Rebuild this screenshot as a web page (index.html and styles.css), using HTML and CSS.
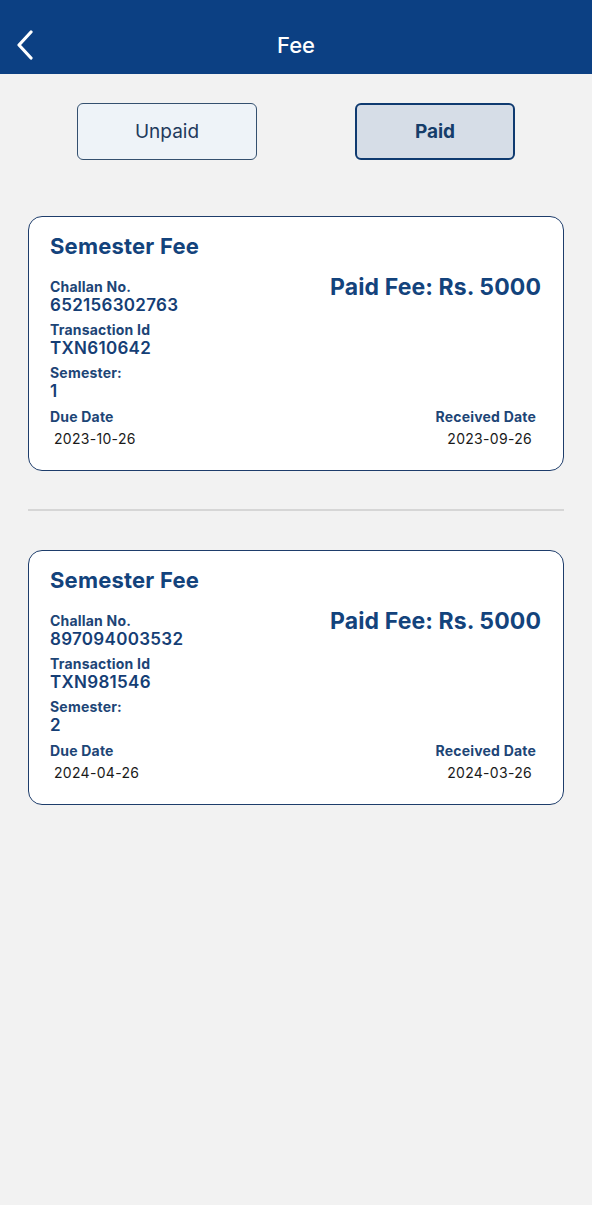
FILE: index.html
```html
<!DOCTYPE html>
<html lang="en">
<head>
<meta charset="utf-8">
<title>Fee</title>
<link rel="stylesheet" href="styles.css">
</head>
<body>
<header class="topbar">
  <button class="back" aria-label="Back">
    <svg width="20" height="30" viewBox="0 0 20 30"><path d="M15 2 L3 15 L15 28" fill="none" stroke="#fff" stroke-width="3.2" stroke-linecap="round" stroke-linejoin="round"/></svg>
  </button>
  <h1 class="title">Fee</h1>
</header>

<div class="tabs">
  <button class="tab tab-unpaid">Unpaid</button>
  <button class="tab tab-paid">Paid</button>
</div>

<main class="list">
  <section class="card">
    <h2 class="card-title">Semester Fee</h2>
    <div class="details">
      <div class="fields">
        <div class="field"><div class="label">Challan No.</div><div class="value">652156302763</div></div>
        <div class="field"><div class="label">Transaction Id</div><div class="value">TXN610642</div></div>
        <div class="field"><div class="label">Semester:</div><div class="value">1</div></div>
      </div>
      <div class="amount">Paid Fee: Rs. 5000</div>
    </div>
    <div class="dates">
      <div class="date-col"><div class="label">Due Date</div><div class="date">2023-10-26</div></div>
      <div class="date-col right"><div class="label">Received Date</div><div class="date">2023-09-26</div></div>
    </div>
  </section>

  <hr class="divider">

  <section class="card">
    <h2 class="card-title">Semester Fee</h2>
    <div class="details">
      <div class="fields">
        <div class="field"><div class="label">Challan No.</div><div class="value">897094003532</div></div>
        <div class="field"><div class="label">Transaction Id</div><div class="value">TXN981546</div></div>
        <div class="field"><div class="label">Semester:</div><div class="value">2</div></div>
      </div>
      <div class="amount">Paid Fee: Rs. 5000</div>
    </div>
    <div class="dates">
      <div class="date-col"><div class="label">Due Date</div><div class="date">2024-04-26</div></div>
      <div class="date-col right"><div class="label">Received Date</div><div class="date">2024-03-26</div></div>
    </div>
  </section>
</main>
</body>
</html>
```

FILE: styles.css
```css
* { box-sizing: border-box; }
html, body { margin: 0; padding: 0; }
body {
  background: #f2f2f2;
  font-family: Inter, "Noto Sans", "Liberation Sans", sans-serif;
  width: 592px;
  min-height: 1205px;
  color: #153e75;
}
.topbar {
  height: 74px;
  background: #0c4083;
  display: flex;
  align-items: center;
  justify-content: center;
  position: relative;
}
.back {
  position: absolute;
  left: 16px;
  top: 30px;
  background: none;
  border: 0;
  padding: 0;
  display: flex;
}
.title {
  margin: 0;
  padding-top: 16px;
  font-size: 22px;
  font-weight: 500;
  color: #fff;
}
.tabs {
  display: flex;
  padding: 29px 0 0 77px;
  gap: 98px;
}
.tab {
  height: 57px;
  border-radius: 6px;
  font-family: inherit;
  font-size: 19px;
  padding: 0;
}
.tab-unpaid {
  width: 180px;
  background: #eef3f8;
  border: 1.5px solid #34506f;
  color: #1f3a5c;
  font-weight: 400;
}
.tab-paid {
  width: 160px;
  background: #d6dde7;
  border: 2.5px solid #0f3a70;
  color: #163d6a;
  font-weight: 700;
}
.list {
  padding: 56px 28px 0;
}
.card {
  background: #fff;
  border: 1.5px solid #1e3d6b;
  border-radius: 14px;
  height: 255px;
  padding: 16px 22px 0 21px;
}
.card-title {
  margin: 0;
  font-size: 22px;
  line-height: 26px;
  font-weight: 700;
  color: #13437c;
  letter-spacing: 0.2px;
}
.details {
  display: flex;
  justify-content: space-between;
  align-items: flex-start;
  margin-top: 20px;
}
.fields {
  display: flex;
  flex-direction: column;
  gap: 7px;
}
.label {
  font-size: 14px;
  line-height: 16px;
  font-weight: 700;
  color: #1d4576;
  letter-spacing: 0.2px;
}
.value {
  font-size: 17px;
  line-height: 20px;
  font-weight: 600;
  color: #153e75;
  letter-spacing: 0.3px;
}
.amount {
  margin-top: -5px;
  font-size: 23px;
  line-height: 26px;
  font-weight: 700;
  color: #13437c;
  letter-spacing: 0.1px;
}
.dates {
  display: flex;
  justify-content: space-between;
  margin-top: 8px;
  padding-right: 5px;
}
.date-col.right { text-align: right; }
.date {
  margin-top: 4px;
  font-size: 14px;
  line-height: 20px;
  color: #1a1a1a;
  padding: 0 4px;
  letter-spacing: 0.3px;
}
.divider {
  border: 0;
  height: 2px;
  background: #d6d6d6;
  margin: 38px 0 39px;
}
```
